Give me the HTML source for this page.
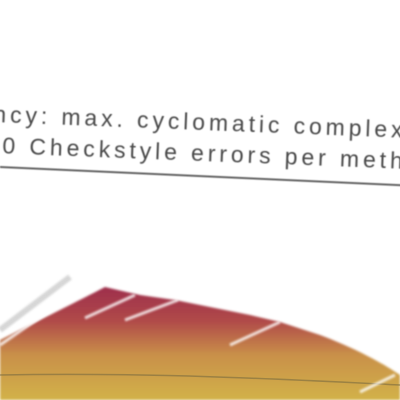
<!DOCTYPE html>
<html><head><style>
html,body{margin:0;width:400px;height:400px;overflow:hidden;background:#fff;}
.t{position:absolute;left:-6px;top:99px;transform:rotate(2.2deg);transform-origin:0 0;font-family:"Liberation Sans",sans-serif;font-size:23px;color:#4a4a4a;white-space:nowrap;letter-spacing:3.9px;line-height:31px;filter:blur(0.4px);}
.line{position:absolute;left:0;top:166px;width:420px;height:2px;background:#666;transform:rotate(2.6deg);transform-origin:0 0;filter:blur(0.4px);}
svg{position:absolute;left:0;top:0;}
</style></head><body>
<div class="t">ncy: max. cyclomatic complex<br>.0 Checkstyle errors per meth</div>
<div class="line"></div>
<svg width="400" height="400">
<defs>
<linearGradient id="g" x1="0" y1="0" x2="0" y2="1">
<stop offset="0" stop-color="#9e2f4c"/>
<stop offset="0.3" stop-color="#b04a4a"/>
<stop offset="0.6" stop-color="#c99048"/>
<stop offset="1" stop-color="#d2b24a"/>
</linearGradient>
<filter id="b"><feGaussianBlur stdDeviation="1"/></filter>
</defs>
<path d="M0 340 C40 320 80 300 105 287 L140 295 L175 300 L250 315 L280 322 L320 335 C360 350 385 365 400 375 L400 400 L0 400 Z" fill="url(#g)" filter="url(#b)"/>
<path d="M0 375 C150 372 300 380 400 385" stroke="#7a6a40" stroke-width="1.5" fill="none" opacity="0.6"/>
<g stroke="#fff" stroke-width="3" opacity="0.8" filter="url(#b)">
<line x1="85" y1="318" x2="135" y2="295"/>
<line x1="125" y1="320" x2="178" y2="300"/>
<line x1="230" y1="345" x2="280" y2="322"/>
<line x1="360" y1="392" x2="395" y2="375"/>
<line x1="0" y1="345" x2="65" y2="300"/>
</g>
<line x1="0" y1="330" x2="70" y2="277" stroke="#bbb" stroke-width="6" opacity="0.6" filter="url(#b)"/>
</svg>
</body></html>
